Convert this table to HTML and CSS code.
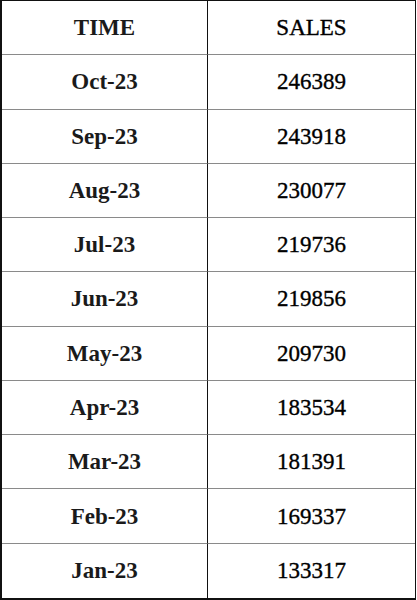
FILE: index.html
```html
<!DOCTYPE html>
<html>
<head>
<meta charset="utf-8">
<link rel="stylesheet" href="styles.css">
</head>
<body>
<div class="table">
  <div class="cell left">TIME</div><div class="cell right">SALES</div>
  <div class="cell left">Oct-23</div><div class="cell right">246389</div>
  <div class="cell left">Sep-23</div><div class="cell right">243918</div>
  <div class="cell left">Aug-23</div><div class="cell right">230077</div>
  <div class="cell left">Jul-23</div><div class="cell right">219736</div>
  <div class="cell left">Jun-23</div><div class="cell right">219856</div>
  <div class="cell left">May-23</div><div class="cell right">209730</div>
  <div class="cell left">Apr-23</div><div class="cell right">183534</div>
  <div class="cell left">Mar-23</div><div class="cell right">181391</div>
  <div class="cell left">Feb-23</div><div class="cell right">169337</div>
  <div class="cell left last">Jan-23</div><div class="cell right last">133317</div>
</div>
</body>
</html>
```
FILE: styles.css
```css
html, body {
  margin: 0;
  padding: 0;
  background: #ffffff;
}
.table {
  box-sizing: border-box;
  width: 416px;
  height: 600px;
  border-left: 2px solid #111;
  border-top: 1px solid #111;
  border-right: 1px solid #111;
  border-bottom: 2px solid #111;
  display: grid;
  grid-template-columns: 206px 1fr;
  grid-template-rows: repeat(11, 1fr);
  font-size: 23px;
  color: #111;
}
.cell {
  display: flex;
  align-items: center;
  justify-content: center;
  padding-top: 1px;
  border-bottom: 1px solid #8a8a8a;
}
.cell.last {
  border-bottom: none;
}
.left {
  font-family: "Liberation Serif", "Times New Roman", serif;
  font-weight: 700;
  color: #1a1a1a;
  border-right: 1px solid #111;
}
.right {
  font-family: "Liberation Serif", "Times New Roman", serif;
  font-weight: 400;
  color: #000;
  -webkit-text-stroke: 0.35px #000;
}
```
